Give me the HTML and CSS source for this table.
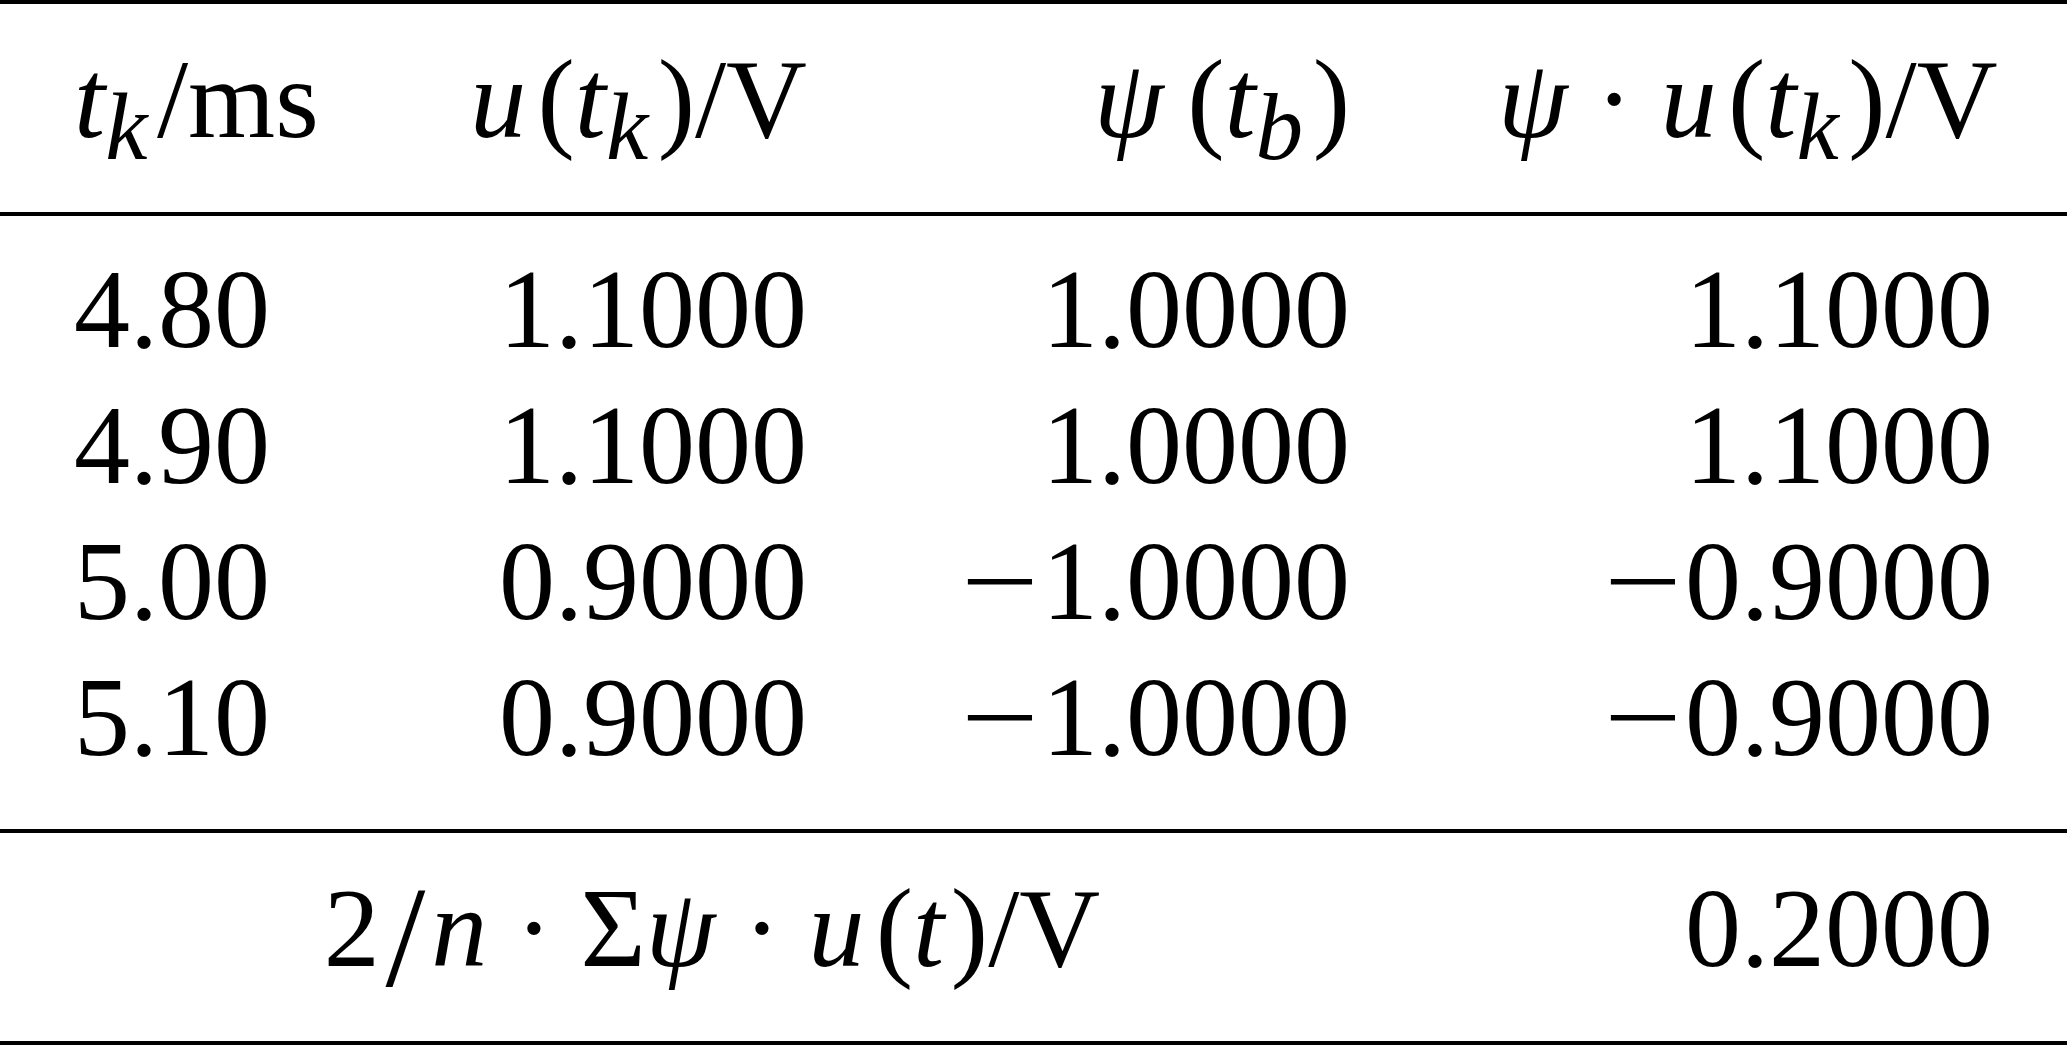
FILE: index.html
```html
<!DOCTYPE html>
<html lang="en">
<head>
    <meta charset="UTF-8">
    <meta name="viewport" content="width=device-width, initial-scale=1.0">
    <title>Demodulation table</title>
    <link rel="stylesheet" href="styles.css">
</head>
<body>
    <table class="results">
        <thead>
            <tr>
                <th class="left col-time"><var>t</var><sub>k</sub>/ms</th>
                <th class="col-volt"><var class="fn">u</var>(<var>t</var><sub>k</sub>)/V</th>
                <th class="col-psi"><var class="fn-wide">ψ</var>(<var>t</var><sub>b</sub>)</th>
                <th class="col-prod"><var>ψ</var><span class="dot">·</span><var class="fn">u</var>(<var>t</var><sub>k</sub>)/V</th>
            </tr>
        </thead>
        <tbody>
            <tr>
                <td class="left">4.80</td>
                <td>1.1000</td>
                <td>1.0000</td>
                <td>1.1000</td>
            </tr>
            <tr>
                <td class="left">4.90</td>
                <td>1.1000</td>
                <td>1.0000</td>
                <td>1.1000</td>
            </tr>
            <tr>
                <td class="left">5.00</td>
                <td>0.9000</td>
                <td><span class="minus">−</span>1.0000</td>
                <td><span class="minus">−</span>0.9000</td>
            </tr>
            <tr>
                <td class="left">5.10</td>
                <td>0.9000</td>
                <td><span class="minus">−</span>1.0000</td>
                <td><span class="minus">−</span>0.9000</td>
            </tr>
        </tbody>
        <tfoot>
            <tr>
                <td class="sum" colspan="3">2<span class="frac-slash">/</span><var>n</var><span class="dot">·</span>Σ<var>ψ</var><span class="dot">·</span><var class="fn">u</var>(<var class="ic">t</var>)/V</td>
                <td>0.2000</td>
            </tr>
        </tfoot>
    </table>
</body>
</html>
```

FILE: styles.css
```css
body {
    margin: 0;
    background-color: #fff;
}
.results {
    width: 100%;
    table-layout: fixed;
    border-collapse: separate;
    border-spacing: 0;
    font-family: "Liberation Serif", "Times New Roman", serif;
    font-size: 112px;
    color: #000;
}
.results th,
.results td {
    box-sizing: border-box;
    padding: 0 74px;
    font-weight: normal;
    text-align: right;
    white-space: nowrap;
}
.results .left {
    text-align: left;
}
.col-time {
    width: 392px;
}
.col-volt {
    width: 489px;
}
.col-psi {
    width: 543px;
}
.col-prod {
    width: 643px;
}
.results thead th,
.results tfoot td {
    line-height: 112px;
    padding-top: 39px;
    padding-bottom: 57px;
    border-top: 4px solid #000;
    border-bottom: 4px solid #000;
}
.results tbody td {
    line-height: 136px;
}
.results tbody tr:first-child td {
    padding-top: 25px;
}
.results tbody tr:last-child td {
    padding-bottom: 44px;
}
.results tfoot .sum {
    text-align: center;
}
var {
    font-style: italic;
}
/* italic correction before a bracket */
.fn {
    margin-right: 0.1em;
}
.fn-wide {
    margin-right: 0.21em;
}
.ic {
    margin-right: 0.06em;
}
sub {
    font-size: 0.85em;
    font-style: italic;
    vertical-align: -0.23em;
    line-height: 0;
    margin-right: 0.1em;
}
.dot {
    padding: 0 0.25em;
}
.minus {
    display: inline-block;
    margin-right: 11px;
    transform: scaleX(1.23);
}
.frac-slash {
    font-size: 1.28em;
    vertical-align: -0.14em;
    line-height: 0;
    margin: 0 0.04em;
}
```
